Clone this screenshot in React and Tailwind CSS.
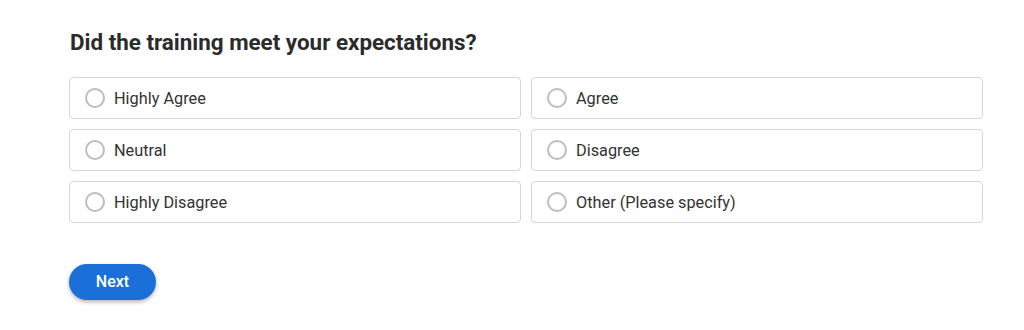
const options = [
  'Highly Agree',
  'Agree',
  'Neutral',
  'Disagree',
  'Highly Disagree',
  'Other (Please specify)',
];

export default function App() {
  return (
    <div className="w-[1024px] h-[330px] bg-white pl-[69px] pt-[27px]" style={{ fontFamily: 'Roboto, "Liberation Sans", sans-serif' }}>
      <div className="w-[914px]">
        <h2 className="text-[22.4px] leading-[30px] font-bold text-[#2b2b2b] pl-[1px]">
          Did the training meet your expectations?
        </h2>

        <div className="grid grid-cols-2 gap-[10px] mt-[20px]">
          {options.map(opt => (
            <label
              key={opt}
              className="flex items-center h-[42px] px-[15px] rounded-[4px] border border-[#d6d6d6] bg-white cursor-pointer"
            >
              <span className="w-[20px] h-[20px] rounded-full border-2 border-[#bdbdbd] shrink-0" />
              <span className="ml-[9px] pt-[2px] text-[16.3px] text-[#333333]">{opt}</span>
            </label>
          ))}
        </div>

        <button className="mt-[41px] w-[87px] h-[36px] rounded-full bg-[#1a6fd8] text-white text-[16px] font-medium shadow-[0_2px_4px_rgba(0,0,0,0.3)]">
          Next
        </button>
      </div>
    </div>
  );
}
